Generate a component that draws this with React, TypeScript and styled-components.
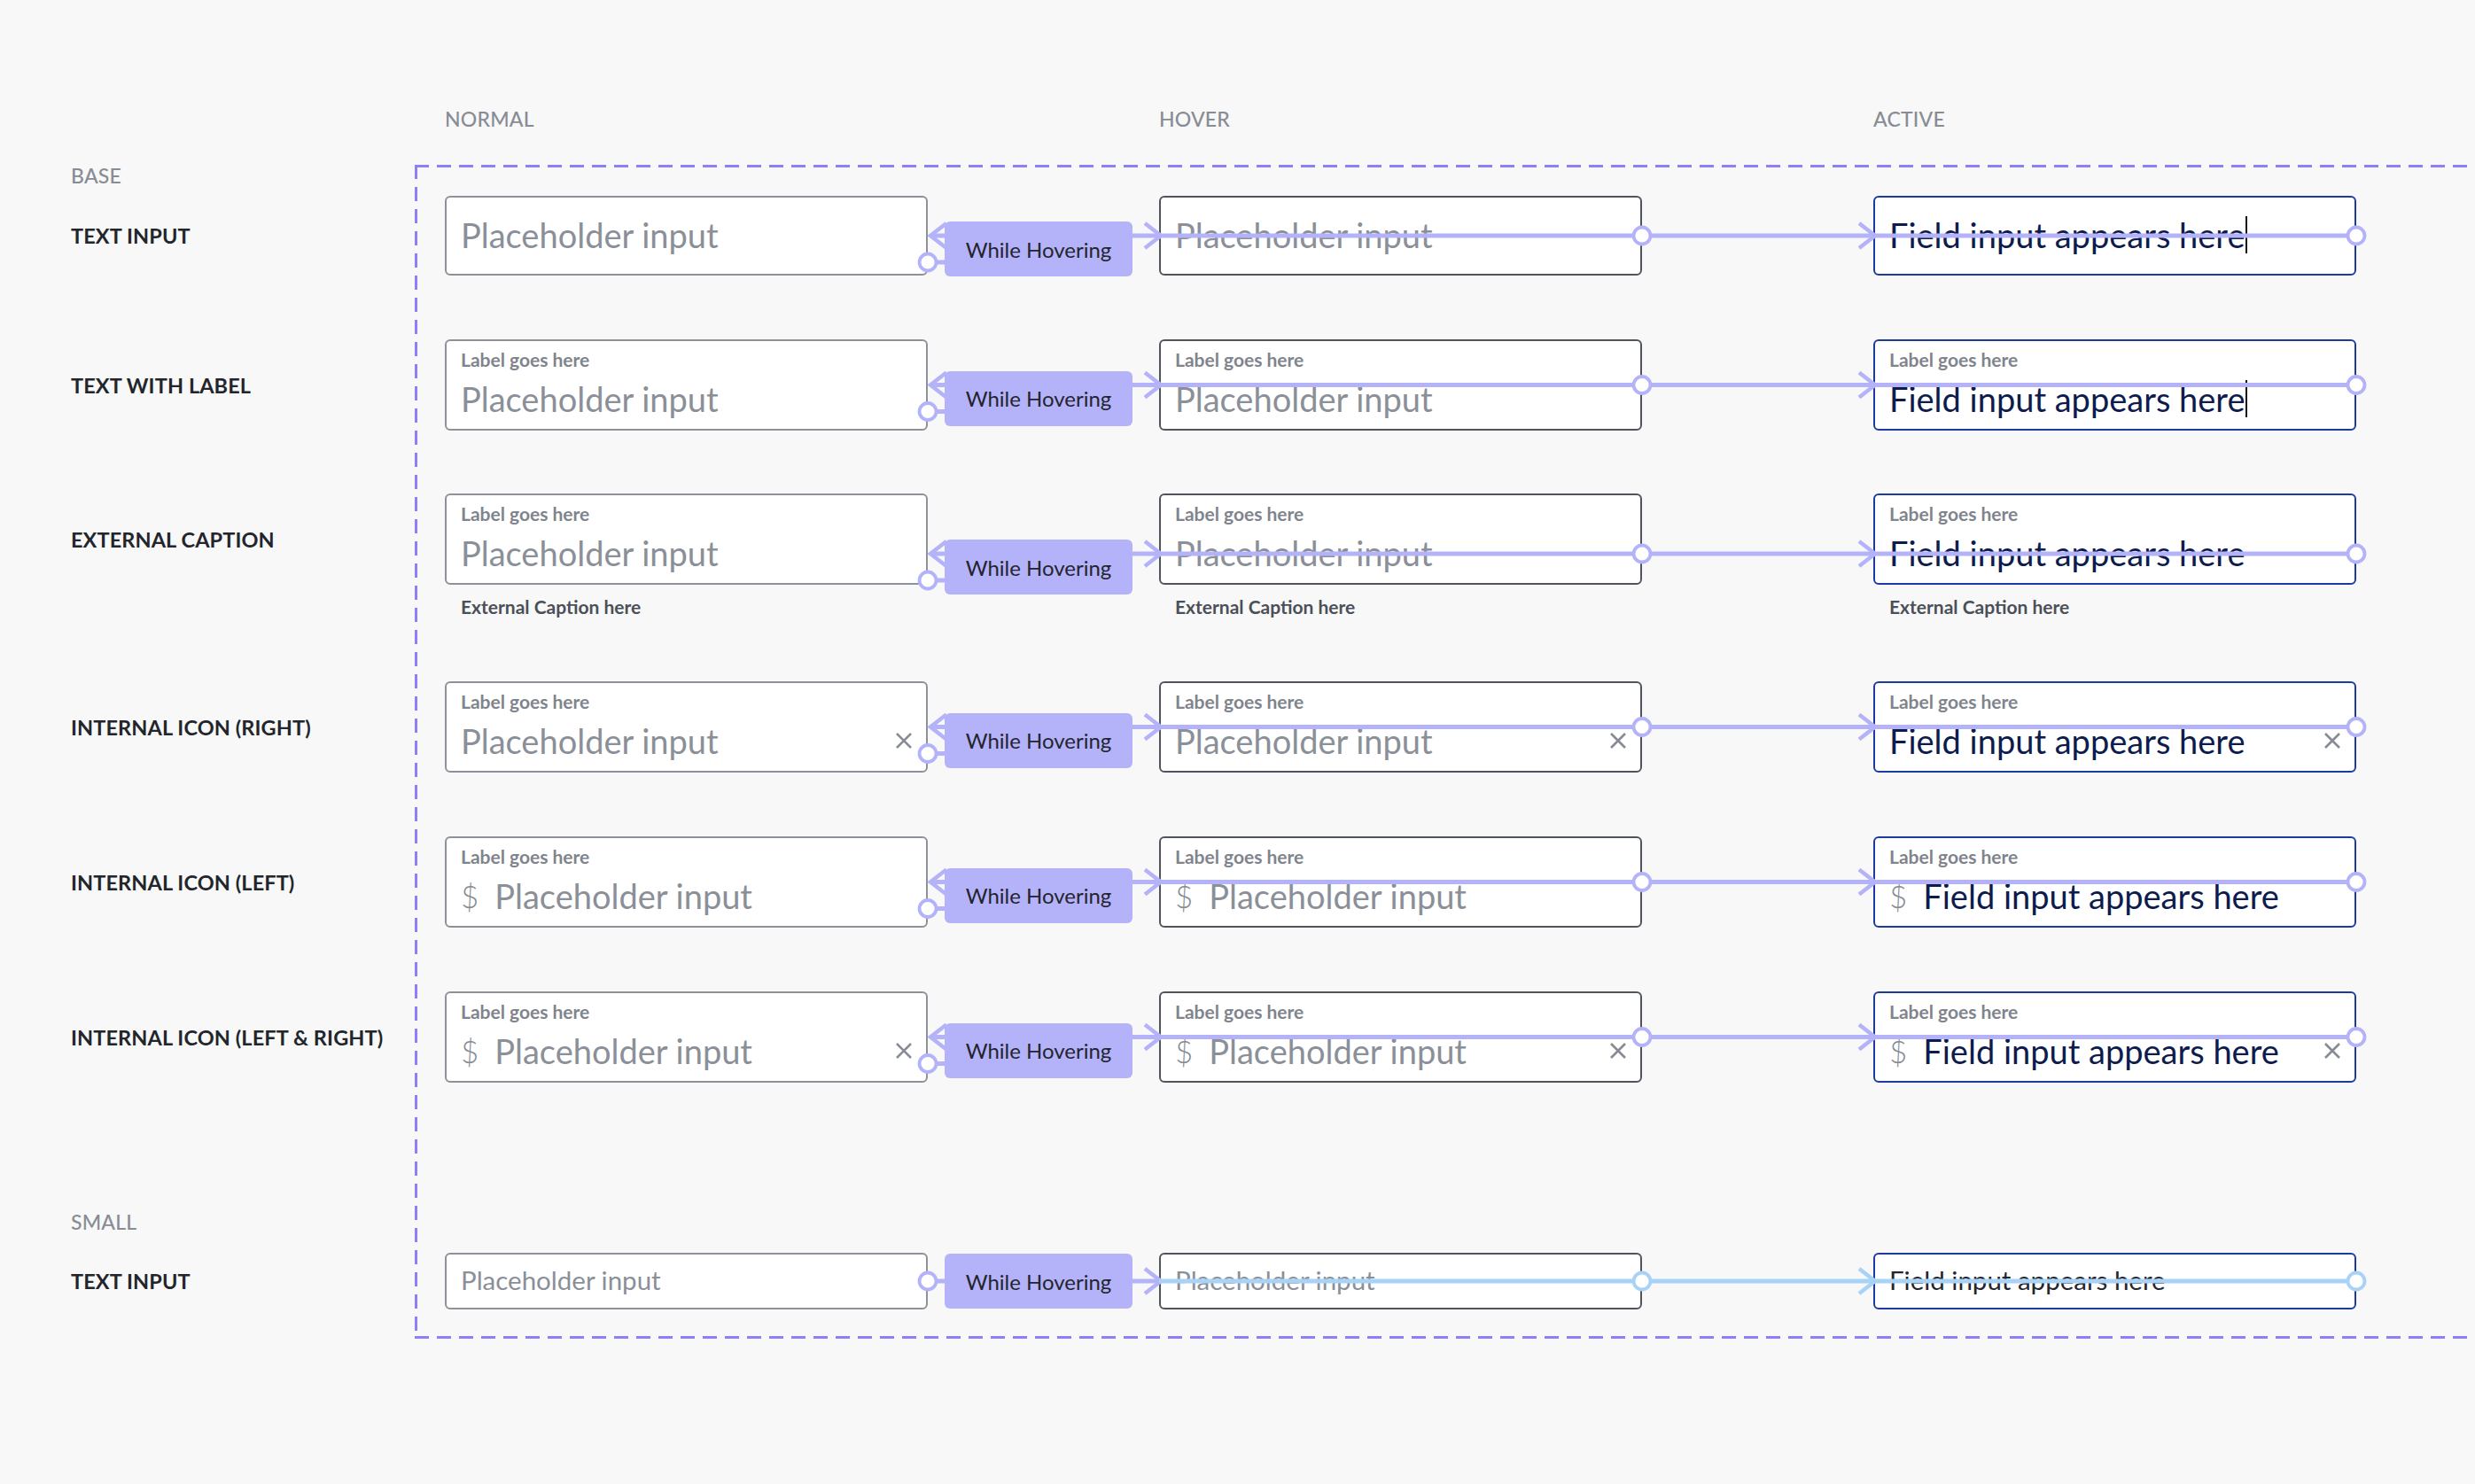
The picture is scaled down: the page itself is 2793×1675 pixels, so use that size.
import React from 'react';
import styled, { createGlobalStyle } from 'styled-components';

type FieldState = 'normal' | 'hover' | 'active';
type Size = 'base' | 'small';
type Variant = 'plain' | 'label' | 'caption' | 'iconRight' | 'iconLeft' | 'iconBoth';

interface RowDef {
  label: string;
  variant: Variant;
  gapAfter: number;
}

const LAVENDER = '#b4b3fa';
const SKY = '#a8d2f6';
const DASH = '#8b80f8';

// x positions (relative to the dashed frame) used by the prototype wires
const NORMAL_RIGHT = 579;
const HOVER_LEFT = 840;
const HOVER_RIGHT = 1385;
const ACTIVE_LEFT = 1646;
const ACTIVE_RIGHT = 2191;

const rows: RowDef[] = [
  { label: 'TEXT INPUT', variant: 'plain', gapAfter: 72 },
  { label: 'TEXT WITH LABEL', variant: 'label', gapAfter: 71 },
  { label: 'EXTERNAL CAPTION', variant: 'caption', gapAfter: 69 },
  { label: 'INTERNAL ICON (RIGHT)', variant: 'iconRight', gapAfter: 72 },
  { label: 'INTERNAL ICON (LEFT)', variant: 'iconLeft', gapAfter: 72 },
  { label: 'INTERNAL ICON (LEFT & RIGHT)', variant: 'iconBoth', gapAfter: 0 },
];

const states: FieldState[] = ['normal', 'hover', 'active'];

const boxHeight = (variant: Variant, size: Size) => {
  if (size === 'small') return 64;
  return variant === 'plain' ? 90 : 103;
};

const wireY = (variant: Variant, size: Size) => {
  if (size === 'small') return 32;
  if (variant === 'plain') return 45;
  if (variant === 'caption') return 68;
  return 51.5;
};

const GlobalStyle = createGlobalStyle`
  html, body {
    margin: 0;
    padding: 0;
    background: #f8f8f8;
    overflow: hidden;
  }
  body {
    font-family: Lato, 'Noto Sans', sans-serif;
  }
`;

const Board = styled.div`
  display: grid;
  grid-template-columns: 388px 2400px;
  padding: 110px 0 0 80px;
  width: 2868px;
`;

const Frame = styled.div<{ $from: number; $to: number }>`
  grid-column: 2;
  grid-row: ${(p) => p.$from} / ${(p) => p.$to};
  background:
    repeating-linear-gradient(90deg, ${DASH} 0 16px, transparent 16px 25px) left top / 100% 3px no-repeat,
    repeating-linear-gradient(90deg, ${DASH} 0 16px, transparent 16px 25px) left bottom / 100% 3px no-repeat,
    repeating-linear-gradient(180deg, ${DASH} 0 16px, transparent 16px 25px) left top / 3px 100% no-repeat;
`;

const ColumnHeads = styled.div`
  grid-column: 2;
  grid-row: 1;
  display: grid;
  grid-template-columns: repeat(3, 545px);
  column-gap: 261px;
  align-items: center;
  height: 48px;
  margin-bottom: 28px;
  padding-left: 34px;
`;

const HeadText = styled.div`
  font-size: 23px;
  font-weight: 500;
  letter-spacing: 0.2px;
  color: #878c95;
`;

const GroupLabel = styled.div<{ $row: number; $top: number; $bottom: number }>`
  grid-column: 1;
  grid-row: ${(p) => p.$row};
  padding: ${(p) => p.$top}px 0 ${(p) => p.$bottom}px;
  font-size: 23px;
  line-height: 24px;
  font-weight: 500;
  letter-spacing: 0.2px;
  color: #878c95;
`;

const RowLabel = styled.div<{ $row: number; $h: number }>`
  grid-column: 1;
  grid-row: ${(p) => p.$row};
  align-self: start;
  height: ${(p) => p.$h}px;
  display: flex;
  align-items: center;
  font-size: 23.5px;
  font-weight: 700;
  letter-spacing: 0.1px;
  color: #22262c;
  white-space: nowrap;
`;

const RowCells = styled.div<{ $row: number; $gap: number }>`
  grid-column: 2;
  grid-row: ${(p) => p.$row};
  position: relative;
  display: grid;
  grid-template-columns: repeat(3, 545px);
  column-gap: 261px;
  align-items: start;
  padding: 0 0 ${(p) => p.$gap}px 34px;
`;

const Spacer = styled.div<{ $row: number; $h: number }>`
  grid-column: 2;
  grid-row: ${(p) => p.$row};
  height: ${(p) => p.$h}px;
`;

const FieldWrap = styled.div`
  display: flex;
  flex-direction: column;
`;

const borderFor = (s: FieldState) =>
  s === 'active' ? '#1c3b9c' : s === 'hover' ? '#50555d' : '#8d9199';

const Box = styled.div<{ $state: FieldState; $h: number; $labeled: boolean }>`
  box-sizing: border-box;
  height: ${(p) => p.$h}px;
  background: #fff;
  border: 2px solid ${(p) => borderFor(p.$state)};
  border-radius: 6px;
  padding: ${(p) => (p.$labeled ? '8px 14px 0 16px' : '0 14px 3px 16px')};
  display: flex;
  flex-direction: column;
  justify-content: ${(p) => (p.$labeled ? 'flex-start' : 'center')};
`;

const FieldLabel = styled.div`
  font-size: 21px;
  line-height: 26px;
  font-weight: 700;
  color: #7f848d;
`;

const ValueRow = styled.div<{ $labeled: boolean; $size: Size }>`
  display: flex;
  align-items: center;
  gap: 18px;
  height: ${(p) => (p.$size === 'small' ? 40 : 48)}px;
  margin-top: ${(p) => (p.$labeled ? 7 : 0)}px;
`;

const Value = styled.div<{ $filled: boolean; $size: Size }>`
  flex: 1;
  white-space: nowrap;
  font-size: ${(p) => (p.$size === 'small' ? 29.5 : 38)}px;
  color: ${(p) => (p.$filled ? (p.$size === 'small' ? '#23262c' : '#0d1b4d') : '#8a8f98')};
  display: flex;
  align-items: center;
`;

const Caret = styled.span`
  display: inline-block;
  width: 2px;
  height: 42px;
  margin-left: 1px;
  background: #111;
`;

const Currency = styled.span`
  font-size: 35px;
  font-weight: 300;
  color: #868b94;
`;

const Caption = styled.div`
  margin-top: 10px;
  padding-left: 18px;
  font-size: 21px;
  line-height: 30px;
  font-weight: 700;
  color: #4b5058;
`;

const Badge = styled.div<{ $top: number }>`
  position: absolute;
  left: 598px;
  top: ${(p) => p.$top}px;
  width: 212px;
  height: 62px;
  border-radius: 6px;
  background: ${LAVENDER};
  display: flex;
  align-items: center;
  justify-content: center;
  font-size: 24px;
  color: #24242f;
  z-index: 3;
`;

const Wires = styled.svg`
  position: absolute;
  left: 0;
  top: 0;
  overflow: visible;
  pointer-events: none;
  z-index: 2;
`;

const ClearIcon = () => (
  <svg width="22" height="22" viewBox="0 0 22 22">
    <path d="M3 3 L19 19 M19 3 L3 19" stroke="#868b94" strokeWidth="2.6" fill="none" />
  </svg>
);

const Chevron = ({ tip, y, dir, color }: { tip: number; y: number; dir: 1 | -1; color: string }) => (
  <polyline
    points={`${tip - dir * 18},${y - 14} ${tip},${y} ${tip - dir * 18},${y + 14}`}
    fill="none"
    stroke={color}
    strokeWidth={4.5}
  />
);

const Node = ({ x, y, color }: { x: number; y: number; color: string }) => (
  <circle cx={x} cy={y} r={9.5} fill="#fff" stroke={color} strokeWidth={3.8} />
);

function Connectors({ c, small }: { c: number; small: boolean }) {
  const loop = small ? SKY : LAVENDER;
  const out = small ? c : c + 30;
  return (
    <Wires width={2300} height={c * 2}>
      <line x1={NORMAL_RIGHT} y1={out} x2={605} y2={out} stroke={LAVENDER} strokeWidth={5} />
      {!small && (
        <>
          <line x1={NORMAL_RIGHT + 3} y1={c} x2={605} y2={c} stroke={LAVENDER} strokeWidth={5} />
          <Chevron tip={NORMAL_RIGHT + 3} y={c} dir={-1} color={LAVENDER} />
        </>
      )}
      <Node x={NORMAL_RIGHT} y={out} color={LAVENDER} />
      <line x1={805} y1={c} x2={HOVER_LEFT} y2={c} stroke={LAVENDER} strokeWidth={5} />
      <Chevron tip={HOVER_LEFT + 2} y={c} dir={1} color={LAVENDER} />
      <line x1={HOVER_LEFT} y1={c} x2={ACTIVE_RIGHT} y2={c} stroke={loop} strokeWidth={5} />
      <Chevron tip={ACTIVE_LEFT + 2} y={c} dir={1} color={loop} />
      <Node x={HOVER_RIGHT} y={c} color={loop} />
      <Node x={ACTIVE_RIGHT} y={c} color={loop} />
    </Wires>
  );
}

function TextField({ variant, state, size }: { variant: Variant; state: FieldState; size: Size }) {
  const labeled = size === 'base' && variant !== 'plain';
  const filled = state === 'active';
  const left = variant === 'iconLeft' || variant === 'iconBoth';
  const right = variant === 'iconRight' || variant === 'iconBoth';
  const caret = filled && size === 'base' && (variant === 'plain' || variant === 'label');

  return (
    <FieldWrap>
      <Box $state={state} $h={boxHeight(variant, size)} $labeled={labeled}>
        {labeled && <FieldLabel>Label goes here</FieldLabel>}
        <ValueRow $labeled={labeled} $size={size}>
          {left && <Currency>$</Currency>}
          <Value $filled={filled} $size={size}>
            {filled ? 'Field input appears here' : 'Placeholder input'}
            {caret && <Caret />}
          </Value>
          {right && <ClearIcon />}
        </ValueRow>
      </Box>
      {variant === 'caption' && <Caption>External Caption here</Caption>}
    </FieldWrap>
  );
}

function StateRow({ row, def, size }: { row: number; def: RowDef; size: Size }) {
  const c = wireY(def.variant, size);
  const small = size === 'small';
  return (
    <>
      <RowLabel $row={row} $h={boxHeight(def.variant, size)}>
        {def.label}
      </RowLabel>
      <RowCells $row={row} $gap={def.gapAfter}>
        {states.map((s) => (
          <TextField key={s} variant={def.variant} state={s} size={size} />
        ))}
        <Connectors c={c} small={small} />
        <Badge $top={small ? c - 31 : c - 16}>While Hovering</Badge>
      </RowCells>
    </>
  );
}

export default function App() {
  const baseStart = 3;
  const smallLabelRow = baseStart + rows.length;
  const smallRow = smallLabelRow + 1;
  const bottomRow = smallRow + 1;

  return (
    <>
      <GlobalStyle />
      <Board>
        <Frame $from={2} $to={bottomRow + 1} />
        <ColumnHeads>
          <HeadText>NORMAL</HeadText>
          <HeadText>HOVER</HeadText>
          <HeadText>ACTIVE</HeadText>
        </ColumnHeads>

        <GroupLabel $row={2} $top={0} $bottom={11}>
          BASE
        </GroupLabel>
        {rows.map((def, i) => (
          <StateRow key={def.label} row={baseStart + i} def={def} size="base" />
        ))}

        <GroupLabel $row={smallLabelRow} $top={145} $bottom={23}>
          SMALL
        </GroupLabel>
        <StateRow row={smallRow} def={{ label: 'TEXT INPUT', variant: 'plain', gapAfter: 0 }} size="small" />
        <Spacer $row={bottomRow} $h={33} />
      </Board>
    </>
  );
}
